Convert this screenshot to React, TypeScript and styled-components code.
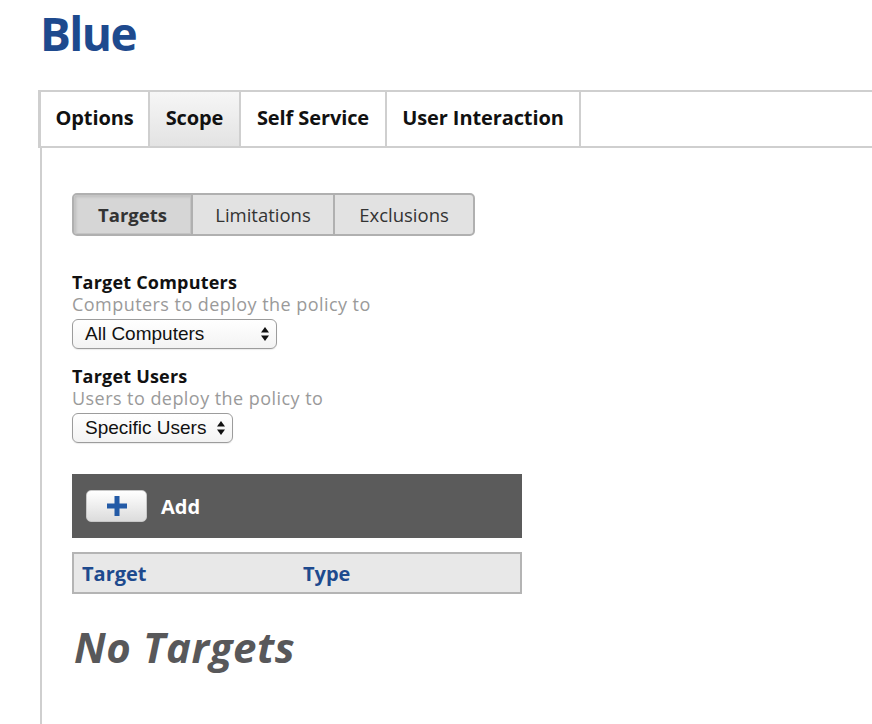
import React from "react";
import styled, { createGlobalStyle } from "styled-components";

const GlobalStyle = createGlobalStyle`
  html, body {
    margin: 0;
    padding: 0;
    background: #fff;
    font-family: "Open Sans", "DejaVu Sans", sans-serif;
  }
`;

const StyledPage = styled.div`
  display: flex;
  flex-direction: column;
  width: 872px;
  height: 724px;
  overflow: hidden;
`;

const StyledTitle = styled.h1`
  margin: 0;
  padding: 6px 0 0 40px;
  height: 90px;
  box-sizing: border-box;
  font-size: 46px;
  line-height: 54px;
  font-weight: 700;
  color: #1e4a8e;
  letter-spacing: -1.6px;
`;

const StyledTabBar = styled.div`
  display: flex;
  margin-left: 38px;
  height: 58px;
  box-sizing: border-box;
  border-top: 2px solid #cfcfcf;
  border-bottom: 2px solid #cfcfcf;
  border-left: 3px solid #cfcfcf;
`;

const StyledTab = styled.div<{ $active?: boolean; $w: number }>`
  display: flex;
  align-items: center;
  justify-content: center;
  width: ${(p) => p.$w}px;
  box-sizing: border-box;
  padding-bottom: 3px;
  border-right: 2px solid #cfcfcf;
  font-size: 20px;
  font-weight: 700;
  color: #111;
  letter-spacing: -0.1px;
  background: ${(p) =>
    p.$active ? "linear-gradient(#f6f6f6, #e3e3e3)" : "#fff"};
`;

const StyledContent = styled.div`
  flex: 1;
  margin-left: 40px;
  border-left: 2px solid #cfcfcf;
  padding: 45px 0 0 30px;
  display: flex;
  flex-direction: column;
  align-items: flex-start;
`;

const StyledSegments = styled.div`
  display: flex;
  height: 43px;
  box-sizing: border-box;
  border: 2px solid #b0b0b0;
  border-radius: 5px;
  background: #e2e2e2;
  overflow: hidden;
`;

const StyledSegment = styled.div<{ $active?: boolean; $w: number }>`
  display: flex;
  align-items: center;
  justify-content: center;
  width: ${(p) => p.$w}px;
  box-sizing: border-box;
  border-right: 2px solid #b0b0b0;
  font-size: 18.5px;
  font-weight: ${(p) => (p.$active ? 700 : 400)};
  color: #333;
  background: ${(p) => (p.$active ? "#d6d6d6" : "transparent")};
  box-shadow: ${(p) =>
    p.$active ? "inset 0 0 0 1px #c4c4c4, inset 2px 2px 3px rgba(0,0,0,0.12)" : "none"};
  &:last-child {
    border-right: none;
  }
`;

const StyledField = styled.div`
  display: flex;
  flex-direction: column;
  align-items: flex-start;
  margin-top: 35px;
  & + & {
    margin-top: 16px;
  }
`;

const StyledLabel = styled.div`
  font-size: 18px;
  line-height: 22px;
  font-weight: 700;
  color: #111;
  letter-spacing: 0.2px;
`;

const StyledHint = styled.div`
  font-size: 18px;
  line-height: 23px;
  color: #9a9a9a;
  letter-spacing: 0.45px;
`;

const StyledSelect = styled.div<{ $w: number }>`
  display: flex;
  align-items: center;
  justify-content: space-between;
  margin-top: 3px;
  width: ${(p) => p.$w}px;
  height: 30px;
  box-sizing: border-box;
  padding: 0 6px 0 12px;
  border: 1px solid #9c9c9c;
  border-radius: 6px;
  background: linear-gradient(#ffffff, #f3f3f3);
  box-shadow: 0 1px 1px rgba(0, 0, 0, 0.08);
  font-family: "Liberation Sans", Arial, sans-serif;
  font-size: 19px;
  color: #111;
`;

const StyledActionBar = styled.div`
  display: flex;
  align-items: center;
  gap: 14px;
  margin-top: 31px;
  width: 450px;
  height: 64px;
  box-sizing: border-box;
  padding-left: 14px;
  background: #5b5b5b;
`;

const StyledAddButton = styled.div`
  display: flex;
  align-items: center;
  justify-content: center;
  width: 61px;
  height: 32px;
  box-sizing: border-box;
  border-radius: 5px;
  border: 1px solid #c8c8c8;
  background: linear-gradient(#ffffff, #dcdcdc);
`;

const StyledAddText = styled.span`
  font-size: 20px;
  font-weight: 700;
  color: #fff;
`;

const StyledTableHead = styled.div`
  display: grid;
  grid-template-columns: 221px 1fr;
  align-items: center;
  margin-top: 14px;
  width: 450px;
  height: 42px;
  box-sizing: border-box;
  padding-left: 8px;
  border: 2px solid #b4b4b4;
  background: #e8e8e8;
`;

const StyledHeadCell = styled.div`
  font-size: 20px;
  font-weight: 700;
  color: #1e4a8e;
`;

const StyledEmpty = styled.div`
  margin: 28px 0 0 2px;
  font-size: 42px;
  line-height: 50px;
  font-weight: 700;
  font-style: italic;
  color: #58585a;
  letter-spacing: 0.6px;
`;

const Arrows = () => (
  <svg width="10" height="16" viewBox="0 0 10 16">
    <path d="M5 1 L9 6.5 H1 Z" fill="#111" />
    <path d="M5 15 L9 9.5 H1 Z" fill="#111" />
  </svg>
);

const Plus = () => (
  <svg width="22" height="22" viewBox="0 0 22 22">
    <rect x="8.5" y="1" width="5" height="20" fill="#235aa6" />
    <rect x="1" y="8.5" width="20" height="5" fill="#235aa6" />
  </svg>
);

const tabs = [
  { name: "Options", w: 109 },
  { name: "Scope", w: 91, active: true },
  { name: "Self Service", w: 146 },
  { name: "User Interaction", w: 194 },
];

const segments = [
  { name: "Targets", w: 119, active: true },
  { name: "Limitations", w: 142 },
  { name: "Exclusions", w: 138 },
];

const App = () => {
  return (
    <StyledPage>
      <GlobalStyle />
      <StyledTitle>Blue</StyledTitle>
      <StyledTabBar>
        {tabs.map((t) => (
          <StyledTab key={t.name} $w={t.w} $active={t.active}>
            {t.name}
          </StyledTab>
        ))}
      </StyledTabBar>
      <StyledContent>
        <StyledSegments>
          {segments.map((s) => (
            <StyledSegment key={s.name} $w={s.w} $active={s.active}>
              {s.name}
            </StyledSegment>
          ))}
        </StyledSegments>
        <StyledField>
          <StyledLabel>Target Computers</StyledLabel>
          <StyledHint>Computers to deploy the policy to</StyledHint>
          <StyledSelect $w={205}>
            All Computers
            <Arrows />
          </StyledSelect>
        </StyledField>
        <StyledField>
          <StyledLabel>Target Users</StyledLabel>
          <StyledHint>Users to deploy the policy to</StyledHint>
          <StyledSelect $w={161}>
            Specific Users
            <Arrows />
          </StyledSelect>
        </StyledField>
        <StyledActionBar>
          <StyledAddButton>
            <Plus />
          </StyledAddButton>
          <StyledAddText>Add</StyledAddText>
        </StyledActionBar>
        <StyledTableHead>
          <StyledHeadCell>Target</StyledHeadCell>
          <StyledHeadCell>Type</StyledHeadCell>
        </StyledTableHead>
        <StyledEmpty>No Targets</StyledEmpty>
      </StyledContent>
    </StyledPage>
  );
};

export default App;
